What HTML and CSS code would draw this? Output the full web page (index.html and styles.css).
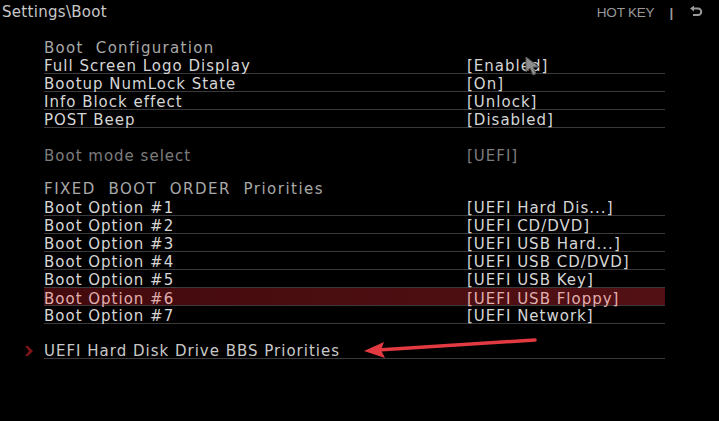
FILE: index.html
```html
<!DOCTYPE html>
<html lang="en">
<head>
    <meta charset="UTF-8">
    <title>Settings\Boot</title>
    <link rel="stylesheet" href="styles.css">
</head>
<body>

<div class="screen">
    <div class="topbar">
        <div class="path">Settings\Boot</div>
        <div class="hotkey">
            <span>HOT KEY</span>
            <span class="sep">|</span>
            <svg class="back" width="14" height="12" viewBox="0 0 14 12">
                <path d="M5 2.5 H9 A3.2 3.2 0 0 1 9 9 H4" fill="none" stroke="#9a9a9a" stroke-width="2"/>
                <path d="M1 2.5 L5 -0.5 L5 5.5 Z" fill="#9a9a9a"/>
            </svg>
        </div>
    </div>

    <div class="menu">
        <div class="group-title first">Boot&nbsp; Configuration</div>
        <div class="row"><span>Full Screen Logo Display</span><span>[Enabled]</span></div>
        <div class="row"><span>Bootup NumLock State</span><span>[On]</span></div>
        <div class="row"><span>Info Block effect</span><span>[Unlock]</span></div>
        <div class="row"><span>POST Beep</span><span>[Disabled]</span></div>

        <div class="row muted"><span>Boot mode select</span><span>[UEFI]</span></div>

        <div class="group-title wide">FIXED&nbsp; BOOT&nbsp; ORDER&nbsp; Priorities</div>
        <div class="row"><span>Boot Option #1</span><span>[UEFI Hard Dis...]</span></div>
        <div class="row"><span>Boot Option #2</span><span>[UEFI CD/DVD]</span></div>
        <div class="row"><span>Boot Option #3</span><span>[UEFI USB Hard...]</span></div>
        <div class="row"><span>Boot Option #4</span><span>[UEFI USB CD/DVD]</span></div>
        <div class="row"><span>Boot Option #5</span><span>[UEFI USB Key]</span></div>
        <div class="row selected"><span>Boot Option #6</span><span>[UEFI USB Floppy]</span></div>
        <div class="row"><span>Boot Option #7</span><span>[UEFI Network]</span></div>

        <div class="row submenu">
            <svg class="marker" width="8" height="10" viewBox="0 0 8 10">
                <path d="M0 0 L3 0 L8 5 L3 10 L0 10 L4 5 Z" fill="#7e1418"/>
            </svg>
            <span>UEFI Hard Disk Drive BBS Priorities</span>
        </div>
    </div>

    <!-- annotation arrow -->
    <svg class="arrow" width="719" height="421" viewBox="0 0 719 421">
        <line x1="535" y1="340" x2="378" y2="350" stroke="#e23a40" stroke-width="3.5" stroke-linecap="round"/>
        <path d="M364 351 L384 342 L381 350 L385 358 Z" fill="#e23a40"/>
    </svg>

    <!-- mouse pointer -->
    <svg class="pointer" width="18" height="22" viewBox="0 0 18 22">
        <path d="M2 1 L2 16 L6 12 L9 19 L12 17.5 L9 11 L15 11 Z" fill="#8c8c8c" stroke="#5a5a5a" stroke-width="1"/>
    </svg>
</div>

</body>
</html>
```

FILE: styles.css
```css
body {
    margin: 0;
    background-color: #000;
    font-family: 'DejaVu Sans', sans-serif;
    color: #d6d6d6;
}
.screen {
    position: relative;
    width: 719px;
    height: 421px;
    overflow: hidden;
    background: #000;
}
.topbar {
    display: flex;
    justify-content: space-between;
    align-items: center;
    height: 24px;
    padding: 0 16px 0 2px;
}
.path {
    font-size: 15px;
    color: #c8c8c8;
    letter-spacing: 0.3px;
}
.hotkey {
    display: flex;
    align-items: center;
    gap: 12px;
    font-family: 'Liberation Sans', sans-serif;
    font-size: 13.5px;
    color: #9a9a9a;
    letter-spacing: -0.2px;
}
.hotkey .sep {
    font-weight: bold;
    margin-left: 3px;
}
.back {
    margin-left: 4px;
}
.menu {
    width: 621px;
    margin-left: 44px;
    padding-top: 14px;
}
.group-title {
    height: 18px;
    line-height: 20px;
    font-size: 15px;
    color: #a8a8a8;
    letter-spacing: 1.3px;
}
.group-title.wide {
    margin-top: 15px;
    margin-bottom: 1px;
    letter-spacing: 1.5px;
}
.row {
    display: grid;
    grid-template-columns: 423px 1fr;
    height: 18px;
    box-sizing: border-box;
    padding-top: 3px;
    line-height: 15px;
    font-size: 15px;
    letter-spacing: 1px;
    border-bottom: 1px solid #3a3a3a;
    white-space: nowrap;
}
.row.muted {
    margin-top: 18px;
    color: #7c7c7c;
    border-bottom-color: transparent;
}
.row.selected {
    background: linear-gradient(to right, #430a0d, #521014);
    color: #e0b0b0;
    border-top: 1px solid #3a3a3a;
    margin-top: -1px;
    height: 19px;
    padding-top: 4px;
}
.row.submenu {
    position: relative;
    display: block;
    margin-top: 17px;
    color: #c8c8c8;
}
.marker {
    position: absolute;
    left: -19px;
    top: 5px;
}
.arrow {
    position: absolute;
    left: 0;
    top: 0;
}
.pointer {
    position: absolute;
    left: 524px;
    top: 56px;
}
```
